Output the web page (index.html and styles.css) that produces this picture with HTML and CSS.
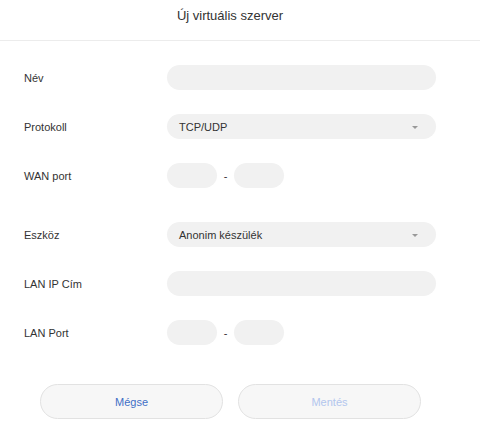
FILE: index.html
```html
<!DOCTYPE html>
<html>
<head>
    <title>Új virtuális szerver</title>
    <link rel="stylesheet" href="styles.css">
</head>
<body>
    <div class="dialog">
        <div class="header">Új virtuális szerver</div>
        <div class="form">
            <div class="row">
                <label>Név</label>
                <input class="field" type="text">
            </div>
            <div class="row">
                <label>Protokoll</label>
                <div class="field select">
                    <span>TCP/UDP</span>
                    <span class="arrow"></span>
                </div>
            </div>
            <div class="row gap-after">
                <label>WAN port</label>
                <div class="range">
                    <input class="port" type="text">
                    <span class="dash">-</span>
                    <input class="port" type="text">
                </div>
            </div>
            <div class="row">
                <label>Eszköz</label>
                <div class="field select">
                    <span>Anonim készülék</span>
                    <span class="arrow"></span>
                </div>
            </div>
            <div class="row">
                <label>LAN IP Cím</label>
                <input class="field" type="text">
            </div>
            <div class="row">
                <label>LAN Port</label>
                <div class="range">
                    <input class="port" type="text">
                    <span class="dash">-</span>
                    <input class="port" type="text">
                </div>
            </div>
        </div>
        <div class="actions">
            <button class="btn cancel">Mégse</button>
            <button class="btn save" disabled>Mentés</button>
        </div>
    </div>
</body>
</html>
```

FILE: styles.css
```css
:root {
    --text: #333;
    --field-bg: #f1f1f1;
    --btn-bg: #f7f7f7;
    --btn-border: #e2e2e2;
    --blue: #3f6fc6;
    --blue-light: #b2c6ee;
}

body {
    margin: 0;
    background: #fff;
    color: var(--text);
    font-family: "Liberation Sans", Arial, sans-serif;
    font-size: 11px;
}

.dialog {
    width: 480px;
}

.header {
    height: 40px;
    line-height: 31px;
    padding-right: 20px;
    text-align: center;
    font-size: 13px;
    border-bottom: 1px solid #ececec;
}

.form {
    padding: 24px 0 0 24px;
}

.row {
    display: flex;
    align-items: center;
    height: 25px;
    margin-bottom: 24px;
}

.row.gap-after {
    margin-bottom: 34px;
}

.row label {
    width: 143px;
}

.field {
    box-sizing: border-box;
    width: 269px;
    height: 25px;
    border: none;
    border-radius: 13px;
    background: var(--field-bg);
    padding: 0 12px;
    font: inherit;
    color: var(--text);
    outline: none;
}

.select {
    display: flex;
    align-items: center;
    justify-content: space-between;
    padding-right: 18px;
}

.arrow {
    width: 0;
    height: 0;
    border-left: 3.5px solid transparent;
    border-right: 3.5px solid transparent;
    border-top: 3.5px solid #999;
    margin-top: 1px;
}

.range {
    display: flex;
    align-items: center;
}

.port {
    box-sizing: border-box;
    width: 50px;
    height: 25px;
    border: none;
    border-radius: 13px;
    background: var(--field-bg);
    outline: none;
}

.dash {
    width: 17px;
    text-align: center;
}

.actions {
    display: flex;
    gap: 15px;
    padding: 15px 0 0 40px;
}

.btn {
    width: 183px;
    height: 35px;
    border: 1px solid var(--btn-border);
    border-radius: 18px;
    background: var(--btn-bg);
    font-family: "Liberation Sans", Arial, sans-serif;
    font-size: 11px;
    cursor: pointer;
}

.cancel {
    color: var(--blue);
}

.save {
    color: var(--blue-light);
    cursor: default;
}
```
